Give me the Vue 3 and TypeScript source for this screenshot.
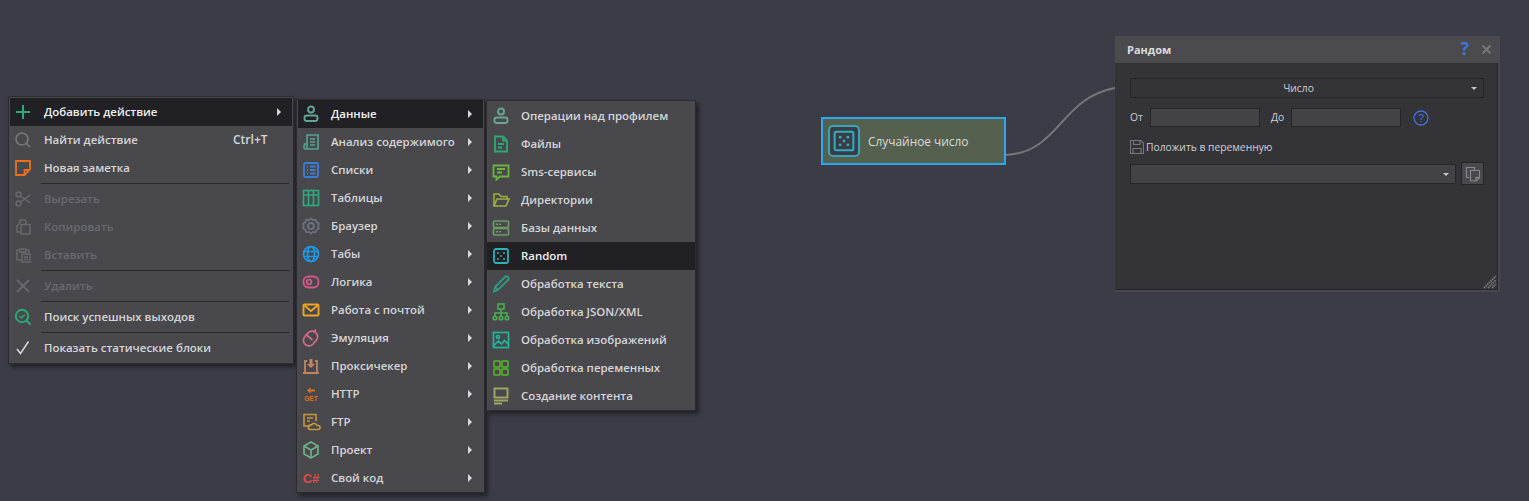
<script setup lang="ts">
interface Row { label?: string; icon?: string; color?: string; arrow?: boolean; hot?: boolean; off?: boolean; keys?: string; sep?: boolean }

const s = 'fill="none" stroke="currentColor"'
const I = {
  plus: `<path ${s} stroke-width="2" d="M10 3v14M3 10h14"/>`,
  search: `<g ${s} stroke-width="1.700"><circle cx="9" cy="9" r="6"/><path d="M13.500 13.500L17 17"/></g>`,
  note: `<g ${s} stroke-width="1.800"><path d="M3 3h14v8.500L11.500 17H3z"/><path d="M11.500 16v-4h5"/></g>`,
  cut: `<g ${s} stroke-width="1.500"><circle cx="5.500" cy="5.500" r="2.500"/><circle cx="5.500" cy="14.500" r="2.500"/><path d="M7.500 7L17 14M7.500 13L17 6"/></g>`,
  copy: `<g ${s} stroke-width="1.400"><path d="M7 6V3h5l1 1v3"/><path d="M7 6L4 8.500V15h4"/><path d="M8 7.500h9V17H8z"/></g>`,
  paste: `<g ${s} stroke-width="1.400"><path d="M8 15H4V5h3M13 5h3v3"/><path d="M7 4h6v3H7z"/><path d="M9 9h8v8H9zM11 12h4M11 14.500h4"/></g>`,
  close: `<path ${s} stroke-width="2" d="M4 4l12 12M16 4L4 16"/>`,
  found: `<g ${s} stroke-width="2"><circle cx="9" cy="9" r="6.200"/><path d="M13.500 13.500L17.500 17.500"/><path stroke-width="1.400" d="M6.500 9l2 2 3.500-3.500"/></g>`,
  check: `<path ${s} stroke-width="1.500" d="M4 11l3.500 4.500L15.500 3.500"/>`,
  user: `<g ${s} stroke-width="1.900"><circle cx="10" cy="5.500" r="3"/><rect x="3.500" y="11.500" width="13" height="5.500" rx="2.200"/></g>`,
  doc: `<g ${s} stroke-width="1.700"><path d="M6 12V3h11v14H4.500a2 2 0 0 1-1-3.500V12H6"/><path d="M9 7h5M9 10h5M9 13h5M6 12v5"/></g>`,
  list: `<g ${s} stroke-width="1.800"><rect x="3" y="3" width="14" height="14" rx="1.500"/><path d="M6 6.500h1M6 10h1M6 13.500h1M9 6.500h5.500M9 10h5.500M9 13.500h5.500"/></g>`,
  table: `<g ${s} stroke-width="1.700"><rect x="2.500" y="2.500" width="15" height="15"/><path d="M2.500 7h15M7.500 2.500v15M12.500 2.500v15"/></g>`,
  gear: `<g ${s} stroke-width="1.800"><path d="M10 2.500l2 1.600 2.600-.4 1 2.400 2.200 1.500-.6 2.400.6 2.400-2.200 1.500-1 2.400-2.600-.4-2 1.600-2-1.600-2.600.4-1-2.400L2.200 12.400l.6-2.400-.6-2.400 2.200-1.500 1-2.400 2.600.4z"/><circle cx="10" cy="10" r="3"/></g>`,
  globe: `<g ${s} stroke-width="1.700"><circle cx="10" cy="10" r="7.500"/><ellipse cx="10" cy="10" rx="3.500" ry="7.500"/><path d="M3 7.500h14M3 12.500h14"/></g>`,
  logic: `<g ${s} stroke-width="1.800"><rect x="2.500" y="4.500" width="15" height="11" rx="5"/><circle cx="8" cy="10" r="2.300"/></g>`,
  mail: `<g ${s} stroke-width="1.900"><rect x="2.500" y="4.500" width="15" height="11" rx="1"/><path d="M3 5l7 6 7-6"/></g>`,
  mouse: `<g ${s} stroke-width="1.700"><rect x="4" y="2.500" width="11" height="16" rx="5.500" transform="rotate(40 9.500 10.500)"/><path d="M5 6.500L11.500 12M12.500 4.500L15 1.500"/></g>`,
  proxy: `<g ${s} stroke-width="1.800"><path d="M6 5H4v12h12V5h-2M2 17h16"/></g><path fill="currentColor" d="M8.500 3h3v5H14l-4 4-4-4h2.500z"/>`,
  get: `<path fill="currentColor" d="M6 6.500L9.500 3.500v2H14v2H9.500v2z"/><text x="10" y="17" text-anchor="middle" font-family="Liberation Sans, sans-serif" font-size="6.500" font-weight="700" fill="currentColor">GET</text>`,
  ftp: `<g ${s} stroke-width="1.600"><path d="M9 14H3V2.500h12V9"/><path d="M6 6h6M6 9h3"/><path d="M9 17.500h8a2 2 0 0 0 0-4h-1a3 3 0 0 0-5.500-.5A2.300 2.300 0 0 0 9 17.500z"/></g>`,
  cube: `<g ${s} stroke-width="1.700"><path d="M10 2l7 4v8l-7 4-7-4V6z"/><path d="M3 6l7 4 7-4M10 10v8"/></g>`,
  cs: `<text x="10" y="15" text-anchor="middle" font-family="Liberation Sans, sans-serif" font-size="13" font-weight="700" fill="currentColor">C#</text>`,
  file: `<g ${s} stroke-width="1.800"><path d="M4 2.500h8l4 4V17.500H4z"/><path d="M12 2.500v4h4M7 10h6M7 13.500h4"/></g>`,
  chat: `<g ${s} stroke-width="1.800"><path d="M2.500 3.500h15v11H9L5.500 17.500v-3h-3z"/><path d="M6 7h8M6 10.500h5"/></g>`,
  folder: `<g ${s} stroke-width="1.600"><path d="M3 16V4h5l2 2.500h6V9"/><path d="M3 16l3-7h12l-3 7z"/></g>`,
  db: `<g ${s} stroke-width="1.700"><rect x="2.500" y="3" width="15" height="6.500" rx="1.200"/><rect x="2.500" y="10.500" width="15" height="6.500" rx="1.200"/></g><path fill="currentColor" d="M5 5.500h2v1.500H5zM8 5.500h2v1.500H8zM5 13h2v1.500H5zM8 13h2v1.500H8z"/>`,
  dice: `<rect ${s} stroke-width="1.800" x="3" y="3" width="14" height="14" rx="2"/><g fill="currentColor"><circle cx="7" cy="7" r="1"/><circle cx="13" cy="7" r="1"/><circle cx="10" cy="10" r="1"/><circle cx="7" cy="13" r="1"/><circle cx="13" cy="13" r="1"/></g>`,
  pen: `<g ${s} stroke-width="1.800"><path d="M3 17.500l1-4.500L14 3a2 2 0 0 1 3 3L7 16z"/><path d="M4 13l3 3"/></g>`,
  tree: `<g ${s} stroke-width="1.600"><rect x="7" y="2" width="6" height="5"/><path d="M10 7v4M4 14v-3h12v3M10 11v3"/><circle cx="4" cy="16" r="1.800"/><circle cx="10" cy="16" r="1.800"/><circle cx="16" cy="16" r="1.800"/></g>`,
  image: `<g ${s} stroke-width="1.700"><rect x="2.500" y="2.500" width="15" height="15"/><circle cx="7" cy="7" r="1.500"/><path d="M2.500 16l5-5 3 3 3-3.500 4 4"/></g>`,
  grid: `<g ${s} stroke-width="1.500"><rect x="3" y="3" width="6" height="6" rx=".5"/><rect x="11" y="3" width="6" height="6" rx=".5"/><rect x="3" y="11" width="6" height="6" rx=".5"/><rect x="11" y="11" width="6" height="6" rx=".5"/></g>`,
  monitor: `<g ${s} stroke-width="1.900"><rect x="3.500" y="2.500" width="13" height="9"/><path d="M3 14.500h14M3 17.500h8"/></g>`
}

const mainMenu: Row[] = [
  { label: 'Добавить действие', icon: I.plus, color: '#2aa878', arrow: true, hot: true },
  { label: 'Найти действие', icon: I.search, color: '#77777c', keys: 'Ctrl+T' },
  { label: 'Новая заметка', icon: I.note, color: '#e8701c' },
  { sep: true },
  { label: 'Вырезать', icon: I.cut, color: '#68686d', off: true },
  { label: 'Копировать', icon: I.copy, color: '#68686d', off: true },
  { label: 'Вставить', icon: I.paste, color: '#68686d', off: true },
  { sep: true },
  { label: 'Удалить', icon: I.close, color: '#68686d', off: true },
  { sep: true },
  { label: 'Поиск успешных выходов', icon: I.found, color: '#2aa878' },
  { sep: true },
  { label: 'Показать статические блоки', icon: I.check, color: '#dcdcdc' }
]
const actionMenu: Row[] = [
  { label: 'Данные', icon: I.user, color: '#62a594', arrow: true, hot: true },
  { label: 'Анализ содержимого', icon: I.doc, color: '#55a193', arrow: true },
  { label: 'Списки', icon: I.list, color: '#3a7fd5', arrow: true },
  { label: 'Таблицы', icon: I.table, color: '#2ea87c', arrow: true },
  { label: 'Браузер', icon: I.gear, color: '#70707c', arrow: true },
  { label: 'Табы', icon: I.globe, color: '#1a9be8', arrow: true },
  { label: 'Логика', icon: I.logic, color: '#d8578a', arrow: true },
  { label: 'Работа с почтой', icon: I.mail, color: '#eea51e', arrow: true },
  { label: 'Эмуляция', icon: I.mouse, color: '#d86a8a', arrow: true },
  { label: 'Проксичекер', icon: I.proxy, color: '#bd8560', arrow: true },
  { label: 'HTTP', icon: I.get, color: '#e0701c', arrow: true },
  { label: 'FTP', icon: I.ftp, color: '#c69a3c', arrow: true },
  { label: 'Проект', icon: I.cube, color: '#70b084', arrow: true },
  { label: 'Свой код', icon: I.cs, color: '#e04a4a', arrow: true }
]
const dataMenu: Row[] = [
  { label: 'Операции над профилем', icon: I.user, color: '#6aa593' },
  { label: 'Файлы', icon: I.file, color: '#2ea875' },
  { label: 'Sms-сервисы', icon: I.chat, color: '#6db33f' },
  { label: 'Директории', icon: I.folder, color: '#9db040' },
  { label: 'Базы данных', icon: I.db, color: '#6f9a68' },
  { label: 'Random', icon: I.dice, color: '#2fb0b8', hot: true },
  { label: 'Обработка текста', icon: I.pen, color: '#2f9a80' },
  { label: 'Обработка JSON/XML', icon: I.tree, color: '#4cae50' },
  { label: 'Обработка изображений', icon: I.image, color: '#1fb89a' },
  { label: 'Обработка переменных', icon: I.grid, color: '#5ab52f' },
  { label: 'Создание контента', icon: I.monitor, color: '#a0a860' }
]
const menus = [
  { id: 'main', rows: mainMenu },
  { id: 'actions', rows: actionMenu },
  { id: 'data', rows: dataMenu }
]
</script>

<template>
  <div class="canvas">
    <svg class="edge" width="1529" height="501">
      <path d="M1006 155C1060 152 1060 98 1115 88" fill="none" stroke="#77777a" stroke-width="2" />
    </svg>

    <div v-for="m in menus" :key="m.id" class="menu" :class="m.id">
      <template v-for="(r, i) in m.rows" :key="i">
        <div v-if="r.sep" class="sep"></div>
        <div v-else class="row" :class="{ hot: r.hot, off: r.off }">
          <svg class="ico" :style="{ color: r.color }" width="20" height="20" viewBox="0 0 20 20" v-html="r.icon"></svg>
          <span class="label">{{ r.label }}</span>
          <span v-if="r.keys" class="keys">{{ r.keys }}</span>
          <span v-if="r.arrow" class="arrow"></span>
        </div>
      </template>
    </div>

    <div class="node">
      <div class="node-ico">
        <svg width="22" height="22" viewBox="0 0 20 20" fill="none">
          <rect x="1.500" y="1.500" width="17" height="17" rx="1.500" stroke="#2fb0c0" stroke-width="1.800" />
          <g fill="#2fb0c0">
            <circle cx="6.500" cy="6.500" r="1.300" /><circle cx="13.500" cy="6.500" r="1.300" /><circle cx="10" cy="10" r="1.300" />
            <circle cx="6.500" cy="13.500" r="1.300" /><circle cx="13.500" cy="13.500" r="1.300" />
          </g>
        </svg>
      </div>
      <span class="node-text">Случайное число</span>
    </div>

    <div class="win">
      <div class="win-head">
        <span class="win-title">Рандом</span>
        <span class="win-help">?</span>
        <svg width="11" height="11" viewBox="0 0 11 11"><path d="M1.500 1.500l8 8M9.500 1.500l-8 8" stroke="#77777c" stroke-width="1.800" /></svg>
      </div>
      <div class="win-body">
        <div class="select">
          <span class="select-text">Число</span>
          <span class="caret"></span>
        </div>
        <div class="range">
          <span class="cap">От</span>
          <div class="input"></div>
          <span class="cap to">До</span>
          <div class="input"></div>
          <svg class="qmark" width="16" height="16" viewBox="0 0 16 16">
            <circle cx="8" cy="8" r="7" fill="none" stroke="#3f74d8" stroke-width="1.300" />
            <text x="8" y="12" text-anchor="middle" font-family="Liberation Sans, sans-serif" font-size="11" fill="#3f74d8">?</text>
          </svg>
        </div>
        <div class="save">
          <svg width="14" height="14" viewBox="0 0 14 14" fill="none" stroke="#77777c" stroke-width="1.100">
            <path d="M.5.500h10.500l2.500 2.500v10.500H.5z" /><path d="M3.500.5v4h6.500v-4M3 13.500v-5h8v5" />
          </svg>
          <span>Положить в переменную</span>
        </div>
        <div class="var-row">
          <div class="combo"><span class="caret"></span></div>
          <div class="copy-btn">
            <svg width="18" height="18" viewBox="0 0 18 18" fill="none" stroke="#88888c" stroke-width="1.200">
              <path d="M5.500 12.500h-3V2.500h8v2.500" /><path d="M6.500 5.500h9v7l-3.500 3.500H6.500z" /><path d="M12 16v-3.500h3.500" />
            </svg>
          </div>
        </div>
        <svg class="grip" width="14" height="14" viewBox="0 0 14 14">
          <path d="M1 13L13 1M5 13l8-8M9 13l4-4" stroke="#7c7c80" stroke-width="1.800" stroke-dasharray="1.500 .8" fill="none" />
        </svg>
      </div>
    </div>
  </div>
</template>

<style>
html, body { margin: 0; background: #3c3c46; }
</style>

<style scoped>
.canvas {
  position: relative;
  width: 1529px;
  height: 501px;
  overflow: hidden;
  background: #3c3c46;
  font-family: "Open Sans", "Noto Sans", sans-serif;
  font-size: 12px;
  color: #d6d6d8;
}
.edge { position: absolute; left: 0; top: 0; }

.menu {
  position: absolute;
  box-sizing: border-box;
  display: flex;
  flex-direction: column;
  background: #48484d;
  border: 1px solid #2b2b30;
  box-shadow: 3px 3px 4px rgba(0, 0, 0, .45);
  padding: 1px;
  font-size: 11.45px;
  font-weight: 600;
}
.main { left: 8px; top: 96px; width: 286px; height: 268px; }
.actions { left: 296px; top: 99px; width: 189px; height: 394px; padding: 0 1px; }
.data { left: 486px; top: 100px; width: 210px; height: 311px; padding: 1px 0; }

.row {
  display: flex;
  align-items: center;
  height: 28px;
  flex: none;
  padding-left: 3px;
  position: relative;
}
.data .row { padding-left: 4px; }
.hot { background: #212125; color: #f0f0f0; }
.off { color: #6a6a70; }
.ico { flex: none; margin-right: 11px; }
.actions .ico, .data .ico { margin-right: 10px; }
.label { margin-top: -2px; }
.keys { position: absolute; left: 223px; top: 5px; font-size: 12px; }
.arrow {
  position: absolute;
  right: 11px;
  top: 10px;
  border-left: 4px solid #d8d8d8;
  border-top: 4px solid transparent;
  border-bottom: 4px solid transparent;
}
.sep {
  flex: none;
  height: 1px;
  margin: 1px 3px 1px 31px;
  background: #2a2a2e;
}

.node {
  position: absolute;
  left: 821px;
  top: 117px;
  box-sizing: border-box;
  width: 185px;
  height: 48px;
  display: flex;
  align-items: center;
  gap: 8px;
  padding-left: 5px;
  background: #55604f;
  border: 2px solid #2aa8f0;
  color: #d8dcd4;
}
.node-text { font-size: 11.9px; margin-top: -1px; }
.node-ico {
  box-sizing: border-box;
  width: 32px;
  height: 32px;
  display: flex;
  align-items: center;
  justify-content: center;
  background: #3c3c46;
  border: 2px solid #35a8b8;
  border-radius: 5px;
}

.win {
  position: absolute;
  left: 1115px;
  top: 36px;
  width: 385px;
  height: 256px;
  display: flex;
  flex-direction: column;
  font-size: 10.3px;
  color: #d0d0d0;
}
.win-head {
  height: 27px;
  flex: none;
  display: flex;
  align-items: center;
  gap: 12px;
  padding: 0 8px 0 12px;
  background: #4a4a4f;
}
.win-title { flex: 1; font-size: 11px; font-weight: 700; color: #dcdcdc; }
.win-help { color: #3f74d8; font-size: 18px; font-weight: 700; line-height: 1; margin-top: -3px; }
.win-body {
  flex: 1;
  position: relative;
  padding: 15px 14px 0 15px;
  display: flex;
  flex-direction: column;
  background: #343338;
  border-right: 2px solid #48484d;
  border-bottom: 2px solid #48484d;
  box-shadow: inset -1px -1px 0 #26262a;
}
.select {
  box-sizing: border-box;
  height: 20px;
  display: flex;
  align-items: center;
  position: relative;
  border: 1px solid #26262a;
  padding-right: 17px;
  padding-bottom: 1px;
}
.select-text { flex: 1; text-align: center; }
.caret {
  position: absolute;
  right: 6px;
  top: 8px;
  border-top: 3px solid #c8c8c8;
  border-left: 3px solid transparent;
  border-right: 3px solid transparent;
}
.range { display: flex; align-items: center; margin-top: 10px; height: 19px; }
.cap { width: 20px; flex: none; padding-bottom: 1px; }
.input {
  box-sizing: border-box;
  width: 110px;
  height: 19px;
  flex: none;
  background: #434347;
  border: 1px solid #26262a;
}
.to { margin-left: 11px; }
.qmark { margin-left: 12px; }
.save { display: flex; align-items: center; gap: 2px; margin-top: 13px; height: 14px; }
.var-row { display: flex; align-items: center; margin-top: 8px; gap: 5px; }
.combo {
  box-sizing: border-box;
  position: relative;
  flex: 1;
  height: 20px;
  background: #434347;
  border: 1px solid #26262a;
}
.copy-btn {
  box-sizing: border-box;
  width: 23px;
  height: 23px;
  display: flex;
  align-items: center;
  justify-content: center;
  background: #48484d;
  border: 1px solid #26262a;
}
.grip { position: absolute; right: 1px; bottom: 1px; }
</style>
